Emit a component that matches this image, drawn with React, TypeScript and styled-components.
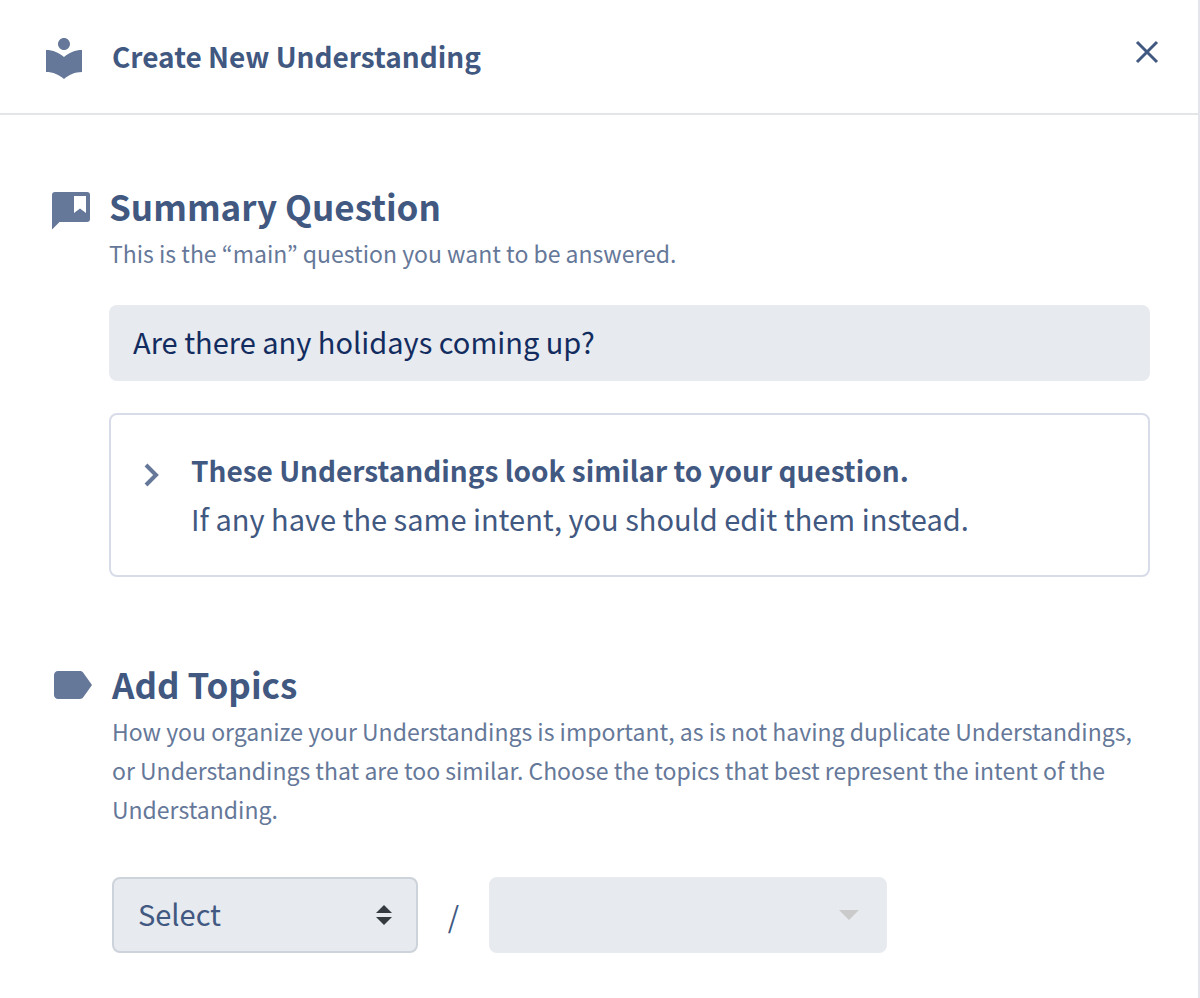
import React, { useState } from "react";
import styled, { createGlobalStyle } from "styled-components";
import { MdLabel, MdLocalLibrary } from "react-icons/md";

const navy = "#415881";
const slate = "#657899";
const field = "#e7eaee";

const GlobalStyle = createGlobalStyle`
  *, *::before, *::after { box-sizing: border-box; }
  body { margin: 0; background: #fff; }
  body, button, input, select {
    font-family: "Noto Sans CJK KR", "Noto Sans", sans-serif;
    color: ${navy};
  }
`;

const Panel = styled.main`
  min-height: 100vh;
  border-right: 2px solid #e4e5ec;
  background: #fff;
`;

const Header = styled.header`
  display: flex;
  align-items: center;
  padding: 0 35px 0 40px;
  height: 115px;
  border-bottom: 2px solid #e4e5e7;
`;

const HeaderIcon = styled(MdLocalLibrary)`
  flex: none;
  margin: 2px 24px 0 0;
  color: ${slate};
`;

const HeaderTitle = styled.h1`
  flex: 1;
  margin: 0 0 2px;
  font-size: 28px;
  line-height: 48px;
  font-weight: 700;
`;

const CloseButton = styled.button`
  display: flex;
  margin: 0 0 10px;
  padding: 4px;
  border: 0;
  background: none;
  cursor: pointer;
`;

const Body = styled.div`
  display: flex;
  flex-direction: column;
  gap: 80px;
  padding: 64px 48px 44px;
`;

const Section = styled.section<{ $gap: number }>`
  display: grid;
  grid-template-columns: 48px minmax(0, 1fr);
  column-gap: ${(p) => p.$gap}px;
`;

const SectionIcon = styled.div<{ $height: number }>`
  display: flex;
  height: ${(p) => p.$height}px;
  align-items: center;
  color: ${slate};
`;

const SectionTitle = styled.h2`
  margin: 0;
  font-size: 35px;
  line-height: 54px;
  font-weight: 700;
`;

const Description = styled.p`
  margin: 0;
  padding-top: 1px;
  font-size: 23px;
  line-height: 39px;
  color: ${slate};
`;

const QuestionInput = styled.input`
  display: block;
  width: 100%;
  height: 76px;
  margin: 32px 0;
  padding: 0 24px 4px;
  border: 0;
  border-radius: 8px;
  background: ${field};
  font-size: 29px;
  color: #132c60;
`;

const SimilarCard = styled.button`
  display: flex;
  align-items: flex-start;
  width: 100%;
  padding: 31px 32px 33px;
  border: 2px solid #d8dce9;
  border-radius: 8px;
  background: #fff;
  font-size: 29px;
  line-height: 48px;
  text-align: left;
  cursor: pointer;
`;

const Chevron = styled.svg`
  flex: none;
  margin: 16px 32px 0 0;
`;

const CardText = styled.span`
  display: flex;
  flex-direction: column;
`;

const CardHeading = styled.strong`
  font-size: 28px;
  font-weight: 700;
`;

const TopicRow = styled.div`
  display: flex;
  align-items: center;
  margin-top: 48px;
`;

const SelectWrap = styled.div<{ $width: number }>`
  position: relative;
  width: ${(p) => p.$width}px;
`;

const Select = styled.select`
  display: block;
  appearance: none;
  width: 100%;
  height: 76px;
  padding: 0 24px 4px;
  border: 2px solid #cdd3da;
  border-radius: 8px;
  background: ${field};
  font-size: 29px;
  opacity: 1;

  &:disabled { border-color: ${field}; }
`;

const SelectArrow = styled.svg`
  position: absolute;
  top: 0;
  bottom: 0;
  right: 26px;
  margin: auto 0;
  pointer-events: none;
`;

const Slash = styled.span`
  width: 71px;
  font-size: 29px;
  line-height: 48px;
  text-align: center;
`;

export default function App() {
  const [question, setQuestion] = useState("Are there any holidays coming up?");
  const [expanded, setExpanded] = useState(false);

  return (
    <>
      <GlobalStyle />
      <Panel>
        <Header>
          <HeaderIcon size={48} aria-hidden />
          <HeaderTitle>Create New Understanding</HeaderTitle>
          <CloseButton type="button" aria-label="Close">
            <svg width="24" height="24" viewBox="0 0 24 24" fill="none" stroke={navy} strokeWidth="3">
              <path d="M2 2 22 22M22 2 2 22" />
            </svg>
          </CloseButton>
        </Header>
        <Body>
          <Section $gap={13}>
            <SectionIcon $height={64}>
              <svg width="48" height="48" viewBox="0 0 48 48" aria-hidden>
                <path
                  fill="currentColor"
                  fillRule="evenodd"
                  d="M7 5h32a3 3 0 0 1 3 3v24a3 3 0 0 1-3 3H11.500L4 42.500V8a3 3 0 0 1 3-3ZM26 9v17l6-4.500 6 4.500V9Z"
                />
              </svg>
            </SectionIcon>
            <div>
              <SectionTitle id="summary-title">Summary Question</SectionTitle>
              <Description>This is the “main” question you want to be answered.</Description>
              <QuestionInput
                type="text"
                aria-labelledby="summary-title"
                value={question}
                onChange={(e) => setQuestion(e.target.value)}
              />
              <SimilarCard type="button" aria-expanded={expanded} onClick={() => setExpanded(!expanded)}>
                <Chevron width="16" height="26" viewBox="0 0 16 26" fill="none" stroke={slate} strokeWidth="4">
                  <path d="M3 3 13 13 3 23" />
                </Chevron>
                <CardText>
                  <CardHeading>These Understandings look similar to your question.</CardHeading>
                  <span>If any have the same intent, you should edit them instead.</span>
                </CardText>
              </SimilarCard>
            </div>
          </Section>
          <Section $gap={16}>
            <SectionIcon $height={56}>
              <MdLabel size={48} aria-hidden />
            </SectionIcon>
            <div>
              <SectionTitle>Add Topics</SectionTitle>
              <Description>
                How you organize your Understandings is important, as is not having duplicate Understandings, or
                Understandings that are too similar. Choose the topics that best represent the intent of the
                Understanding.
              </Description>
              <TopicRow>
                <SelectWrap $width={306}>
                  <Select aria-label="Topic" defaultValue="">
                    <option value="">Select</option>
                  </Select>
                  <SelectArrow width="16" height="20" viewBox="0 0 16 20" fill="#343a40">
                    <path d="M0 8 8 0l8 8ZM0 12h16l-8 8Z" />
                  </SelectArrow>
                </SelectWrap>
                <Slash>/</Slash>
                <SelectWrap $width={398}>
                  <Select aria-label="Subtopic" disabled />
                  <SelectArrow width="24" height="10" viewBox="0 0 24 10" fill="#cacaca">
                    <path d="M2 0h20L12 10Z" />
                  </SelectArrow>
                </SelectWrap>
              </TopicRow>
            </div>
          </Section>
        </Body>
      </Panel>
    </>
  );
}
